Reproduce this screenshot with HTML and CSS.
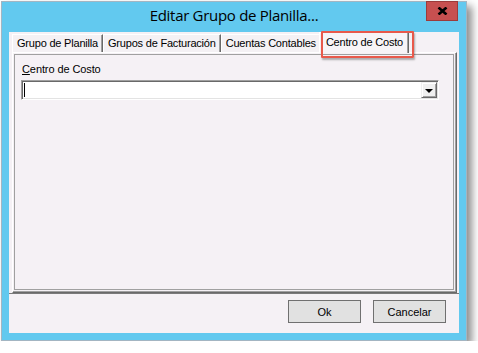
FILE: index.html
```html
<!DOCTYPE html>
<html>
<head>
<meta charset="utf-8">
<link rel="stylesheet" href="styles.css">
</head>
<body>
<div class="window">
  <div class="titlebar">
    <span class="title">Editar Grupo de Planilla...</span>
    <button class="close" aria-label="Cerrar">
      <svg width="11" height="8" viewBox="0 0 11 8"><path d="M1.5 0.5 L9.5 7.5 M9.5 0.5 L1.5 7.5" stroke="#000" stroke-width="2.6" fill="none"/></svg>
    </button>
  </div>
  <div class="client">
    <div class="tabctl">
      <div class="tabstrip">
        <div class="tab">Grupo de Planilla</div>
        <div class="tab">Grupos de Facturación</div>
        <div class="tab">Cuentas Contables</div>
        <div class="tab active">Centro de Costo</div>
      </div>
      <div class="panel">
        <div class="page">
          <div class="label"><u>C</u>entro de Costo</div>
          <div class="combo">
            <div class="combo-text"><span class="caret"></span></div>
            <div class="combo-btn"><span class="arrow"></span></div>
          </div>
        </div>
      </div>
    </div>
    <div class="footer">
      <button class="btn">Ok</button>
      <button class="btn">Cancelar</button>
    </div>
  </div>
  <div class="highlight"></div>
</div>
</body>
</html>
```

FILE: styles.css
```css
* { box-sizing: border-box; }

body {
  margin: 0;
  background: #ffffff;
  font-family: "Liberation Sans", Arial, sans-serif;
  font-size: 11px;
  color: #000;
}

.window {
  position: relative;
  margin: 1px 0 0 1px;
  width: 466px;
  height: 340px;
  border: 1px solid #a3b5c2;
  background: #62c9ef;
  padding: 0 7px 7px 7px;
  display: flex;
  flex-direction: column;
  box-shadow: 5px 5px 8px rgba(0, 0, 0, 0.45);
}

.titlebar {
  height: 30px;
  display: grid;
  grid-template-columns: 1fr auto 1fr;
}

.title {
  grid-column: 2;
  font-family: "Open Sans", "Noto Sans", sans-serif;
  font-size: 15px;
  line-height: 26px;
  letter-spacing: -0.3px;
  color: #000;
  white-space: nowrap;
}

.close {
  grid-column: 3;
  justify-self: end;
  align-self: start;
  margin: -1px 1px 0 0;
  width: 32px;
  height: 20px;
  border: 1px solid #9c3b3b;
  background: #c75050;
  padding: 0;
  display: flex;
  align-items: center;
  justify-content: center;
}

.client {
  flex: 1;
  background: #f5f1f5;
  display: flex;
  flex-direction: column;
}

.tabctl {
  height: 261px;
  padding: 0 2px 0 3px;
  display: flex;
  flex-direction: column;
}

.tabstrip {
  height: 20px;
  display: flex;
  align-items: flex-end;
  position: relative;
  z-index: 1;
}

.tab {
  height: 18px;
  padding: 0 4px;
  line-height: 17px;
  letter-spacing: -0.2px;
  white-space: nowrap;
  background: #f4f1f4;
  border-top: 1px solid #ffffff;
  border-left: 1px solid #ffffff;
  border-right: 1px solid #696969;
  box-shadow: inset -1px 0 #a0a0a0;
}

.tab.active {
  height: 21px;
  margin: 0 -2px -1px -2px;
  padding: 0 5px 0 6px;
  line-height: 19px;
  background: #f7f4f7;
  position: relative;
}

.panel {
  flex: 1;
  border: 1px solid;
  border-color: #ffffff #696969 #696969 #ffffff;
  box-shadow: inset -1px -1px #a0a0a0;
  padding: 1px 2px 2px 1px;
  display: flex;
}

.page {
  flex: 1;
  border: 1px solid #a0a0a0;
  padding: 8px 14px 0 7px;
}

.label {
  line-height: 13px;
  letter-spacing: -0.1px;
}

.label u {
  text-decoration: underline;
}

.combo {
  margin: 4px 0 0 -1px;
  height: 20px;
  display: flex;
  background: #ffffff;
  border-top: 1px solid #a0a0a0;
  border-left: 1px solid #a0a0a0;
  border-right: 1px solid #ffffff;
  border-bottom: 1px solid #ffffff;
  box-shadow: inset 1px 1px #696969, inset -1px -1px #e3e3e3;
  padding: 1px;
}

.combo-text {
  flex: 1;
  display: flex;
  align-items: center;
  padding-left: 1px;
}

.caret {
  width: 1px;
  height: 14px;
  background: #000;
}

.combo-btn {
  width: 16px;
  background: #f0f0f0;
  border: 1px solid;
  border-color: #f0f0f0 #696969 #696969 #f0f0f0;
  box-shadow: inset 1px 1px #ffffff, inset -1px -1px #a0a0a0;
  display: flex;
  align-items: center;
  justify-content: center;
}

.arrow {
  width: 0;
  height: 0;
  border-left: 4px solid transparent;
  border-right: 4px solid transparent;
  border-top: 4px solid #000;
  margin-top: 1px;
}

.footer {
  flex: 1;
  border-top: 1px solid #7a7a7a;
  display: flex;
  justify-content: flex-end;
  align-items: flex-start;
  gap: 12px;
  padding: 6px 13px 0 0;
}

.btn {
  width: 73px;
  height: 23px;
  background: #e1e1e1;
  border: 1px solid #707070;
  font-family: "Liberation Sans", Arial, sans-serif;
  font-size: 11px;
  color: #000;
  padding: 0;
}

.highlight {
  position: absolute;
  left: 319px;
  top: 29px;
  width: 93px;
  height: 27px;
  border: 2px solid #e8594b;
  border-radius: 1px;
  box-shadow: 1px 2px 2px rgba(0, 0, 0, 0.3);
  z-index: 2;
}
```
